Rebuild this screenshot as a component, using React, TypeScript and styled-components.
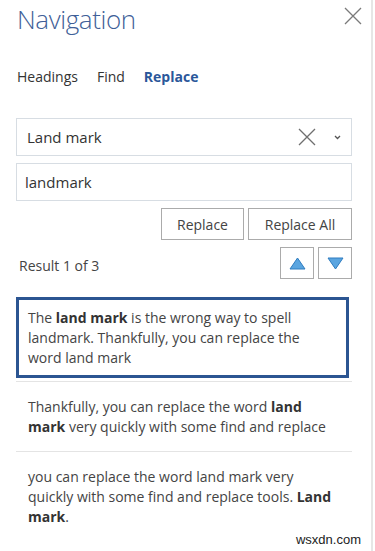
import styled, { createGlobalStyle } from "styled-components";

const GlobalStyle = createGlobalStyle`
  html, body {
    margin: 0;
    padding: 0;
    background: #ffffff;
  }
  body {
    font-family: "Open Sans", "Noto Sans", "Liberation Sans", sans-serif;
    color: #444444;
  }
`;

const Panel = styled.div`
  position: relative;
  width: 371px;
  height: 551px;
  border-right: 2px solid #e6e6e6;
  background: #ffffff;
  overflow: hidden;
`;

const Header = styled.div`
  display: flex;
  justify-content: space-between;
  align-items: flex-start;
  padding: 0 9px 0 17px;
  height: 44px;
`;

const Title = styled.h1`
  margin: 0;
  font-size: 26px;
  font-weight: 300;
  line-height: 38px;
  color: #3f5f98;
  letter-spacing: -0.4px;
`;

const CloseButton = styled.button`
  border: 0;
  background: none;
  padding: 0;
  margin-top: 7px;
  width: 18px;
  height: 18px;
  cursor: pointer;
  svg {
    display: block;
  }
`;

const Tabs = styled.nav`
  display: flex;
  gap: 19px;
  padding: 0 0 0 17px;
  margin-top: 21px;
  height: 22px;
  align-items: center;
`;

const Tab = styled.span<{ active?: boolean }>`
  font-size: 14px;
  font-weight: ${(p) => (p.active ? 700 : 400)};
  color: ${(p) => (p.active ? "#2b579a" : "#333333")};
  cursor: pointer;
`;

const Body = styled.div`
  padding: 0 19px 0 16px;
  margin-top: 31px;
  display: flex;
  flex-direction: column;
`;

const Field = styled.div`
  display: flex;
  align-items: center;
  height: 36px;
  border: 1px solid #d7dde3;
  padding: 0 10px 0 8px;
  font-size: 15px;
  color: #333333;
  & + & {
    margin-top: 7px;
  }
`;

const FieldText = styled.span<{ indent?: number }>`
  flex: 1;
  padding-left: ${(p) => p.indent ?? 0}px;
`;

const FieldIcon = styled.span`
  display: flex;
  align-items: center;
  margin-left: 18px;
  svg {
    display: block;
  }
`;

const ButtonRow = styled.div`
  display: flex;
  justify-content: flex-end;
  gap: 4px;
  margin-top: 7px;
`;

const ActionButton = styled.button<{ w: number }>`
  width: ${(p) => p.w}px;
  height: 32px;
  border: 1px solid #ababab;
  background: #ffffff;
  font-family: inherit;
  font-size: 14px;
  color: #444444;
  padding: 0;
  cursor: pointer;
`;

const ResultRow = styled.div`
  display: flex;
  justify-content: space-between;
  align-items: center;
  margin-top: 7px;
  padding-left: 3px;
`;

const ResultCount = styled.span`
  font-size: 14px;
  color: #444444;
  margin-top: 4px;
`;

const ArrowGroup = styled.div`
  display: flex;
  gap: 4px;
`;

const ArrowButton = styled.button`
  width: 34px;
  height: 32px;
  border: 1px solid #ababab;
  background: #ffffff;
  padding: 0;
  display: flex;
  align-items: center;
  justify-content: center;
  cursor: pointer;
`;

const Results = styled.ul`
  list-style: none;
  margin: 18px 0 0;
  padding: 0;
`;

const ResultItem = styled.li<{ selected?: boolean }>`
  font-size: 14px;
  line-height: 20px;
  color: #444444;
  padding: ${(p) => (p.selected ? "8px 30px 7px 9px" : "15px 12px 14px")};
  border: ${(p) => (p.selected ? "3px solid #2b5592" : "0")};
  margin-right: ${(p) => (p.selected ? "3px" : "0")};
  & + & {
    border-top: 1px solid #e4e4e4;
  }
  &:first-child {
    margin-bottom: 3px;
  }
  b {
    font-weight: 700;
    color: #333333;
  }
`;

const Watermark = styled.span`
  position: absolute;
  right: 10px;
  bottom: 4px;
  font-family: "Liberation Sans", sans-serif;
  font-size: 13px;
  color: #222222;
`;

function XIcon({ size, color }: { size: number; color: string }) {
  return (
    <svg width={size} height={size} viewBox="0 0 18 18">
      <path d="M1 1 17 17M17 1 1 17" stroke={color} strokeWidth="1.3" fill="none" />
    </svg>
  );
}

function Triangle({ up }: { up?: boolean }) {
  return (
    <svg width="17" height="13" viewBox="0 0 17 13">
      <polygon
        points={up ? "8.5,1 16,12 1,12" : "1,1 16,1 8.5,12"}
        fill="#5aa5e0"
        stroke="#2e7cc0"
        strokeWidth="1"
        strokeLinejoin="round"
      />
    </svg>
  );
}

export default function App() {
  return (
    <>
      <GlobalStyle />
      <Panel>
        <Header>
          <Title>Navigation</Title>
          <CloseButton aria-label="Close">
            <XIcon size={18} color="#7a7a7a" />
          </CloseButton>
        </Header>
        <Tabs>
          <Tab>Headings</Tab>
          <Tab>Find</Tab>
          <Tab active>Replace</Tab>
        </Tabs>
        <Body>
          <Field>
            <FieldText indent={2}>Land mark</FieldText>
            <FieldIcon>
              <XIcon size={18} color="#6f6f6f" />
            </FieldIcon>
            <FieldIcon>
              <svg width="7" height="5" viewBox="0 0 7 5">
                <path d="M1 1 3.5 3.5 6 1" stroke="#555" strokeWidth="1.3" fill="none" />
              </svg>
            </FieldIcon>
          </Field>
          <Field>
            <FieldText>landmark</FieldText>
          </Field>
          <ButtonRow>
            <ActionButton w={83}>Replace</ActionButton>
            <ActionButton w={104}>Replace All</ActionButton>
          </ButtonRow>
          <ResultRow>
            <ResultCount>Result 1 of 3</ResultCount>
            <ArrowGroup>
              <ArrowButton aria-label="Previous">
                <Triangle up />
              </ArrowButton>
              <ArrowButton aria-label="Next">
                <Triangle />
              </ArrowButton>
            </ArrowGroup>
          </ResultRow>
          <Results>
            <ResultItem selected>
              The <b>land mark</b> is the wrong way to spell landmark. Thankfully, you can
              replace the word land mark
            </ResultItem>
            <ResultItem>
              Thankfully, you can replace the word <b>land mark</b> very quickly with some
              find and replace
            </ResultItem>
            <ResultItem>
              you can replace the word land mark very quickly with some find and replace
              tools. <b>Land mark</b>.
            </ResultItem>
          </Results>
        </Body>
        <Watermark>wsxdn.com</Watermark>
      </Panel>
    </>
  );
}
